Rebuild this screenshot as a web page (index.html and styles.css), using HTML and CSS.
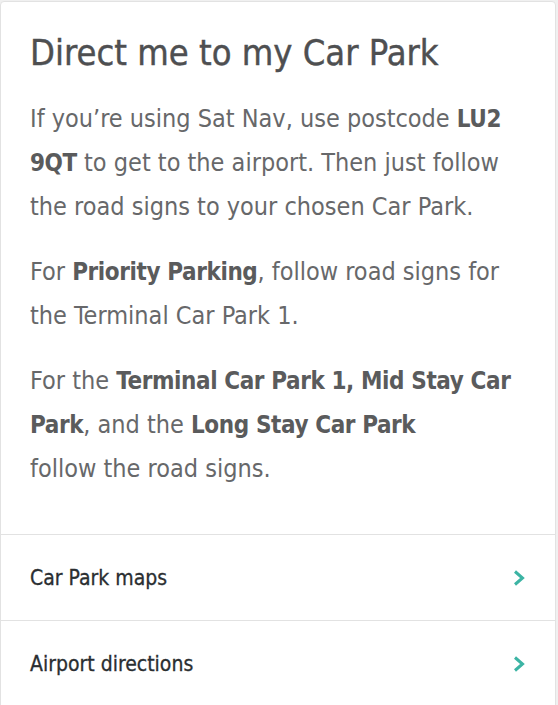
FILE: index.html
```html
<!DOCTYPE html>
<html lang="en">
<head>
  <meta charset="UTF-8">
  <meta name="viewport" content="width=device-width, initial-scale=1.0">
  <title>Direct me to my Car Park</title>
  <link rel="stylesheet" href="styles.css">
</head>
<body>
  <div class="card">
    <div class="card-body">
      <h1>Direct me to my Car Park</h1>
      <p>If you’re using Sat Nav, use postcode <strong>LU2 9QT</strong> to get to the airport. Then just follow the road signs to your chosen Car Park.</p>
      <p>For <strong>Priority Parking</strong>, follow road signs for the Terminal Car Park 1.</p>
      <p>For the <strong>Terminal Car Park 1, Mid Stay Car Park</strong>, and the <strong>Long Stay Car Park</strong><br>follow the road signs.</p>
    </div>

    <a class="link-row" href="#">
      <span>Car Park maps</span>
      <svg class="chevron" width="12" height="16" viewBox="0 0 12 16"><path d="M2 1.5 L9.5 8 L2 14.5" fill="none" stroke="#3cb4a4" stroke-width="3"/></svg>
    </a>
    <a class="link-row" href="#">
      <span>Airport directions</span>
      <svg class="chevron" width="12" height="16" viewBox="0 0 12 16"><path d="M2 1.5 L9.5 8 L2 14.5" fill="none" stroke="#3cb4a4" stroke-width="3"/></svg>
    </a>
  </div>
</body>
</html>
```

FILE: styles.css
```css
* {
  margin: 0;
  padding: 0;
  box-sizing: border-box;
}

body {
  font-family: 'DejaVu Sans Condensed', 'DejaVu Sans', sans-serif;
  background: #f0f0f0;
  padding: 1px 2px 0 0;
}

.card {
  background: #fff;
  border: 1px solid #e2e2e2;
  border-radius: 4px;
  min-height: 760px;
}

.card-body {
  padding: 28px 28px 22px 29px;
}

h1 {
  font-size: 36px;
  font-weight: normal;
  color: #4e4f51;
  line-height: 46px;
  margin-bottom: 21px;
  -webkit-text-stroke: 0.4px #4e4f51;
}

p {
  font-size: 25px;
  line-height: 43px;
  color: #67686a;
  margin-bottom: 22px;
}

strong {
  font-weight: bold;
  font-size: 24px;
  letter-spacing: -0.4px;
  color: #5a5b5c;
}

.link-row {
  display: flex;
  justify-content: space-between;
  align-items: center;
  height: 86px;
  padding: 0 30px 0 29px;
  border-top: 1px solid #e2e2e2;
  text-decoration: none;
  font-size: 21px;
  color: #2a2e31;
  -webkit-text-stroke: 0.3px #2a2e31;
}

.chevron {
  flex-shrink: 0;
}
```
